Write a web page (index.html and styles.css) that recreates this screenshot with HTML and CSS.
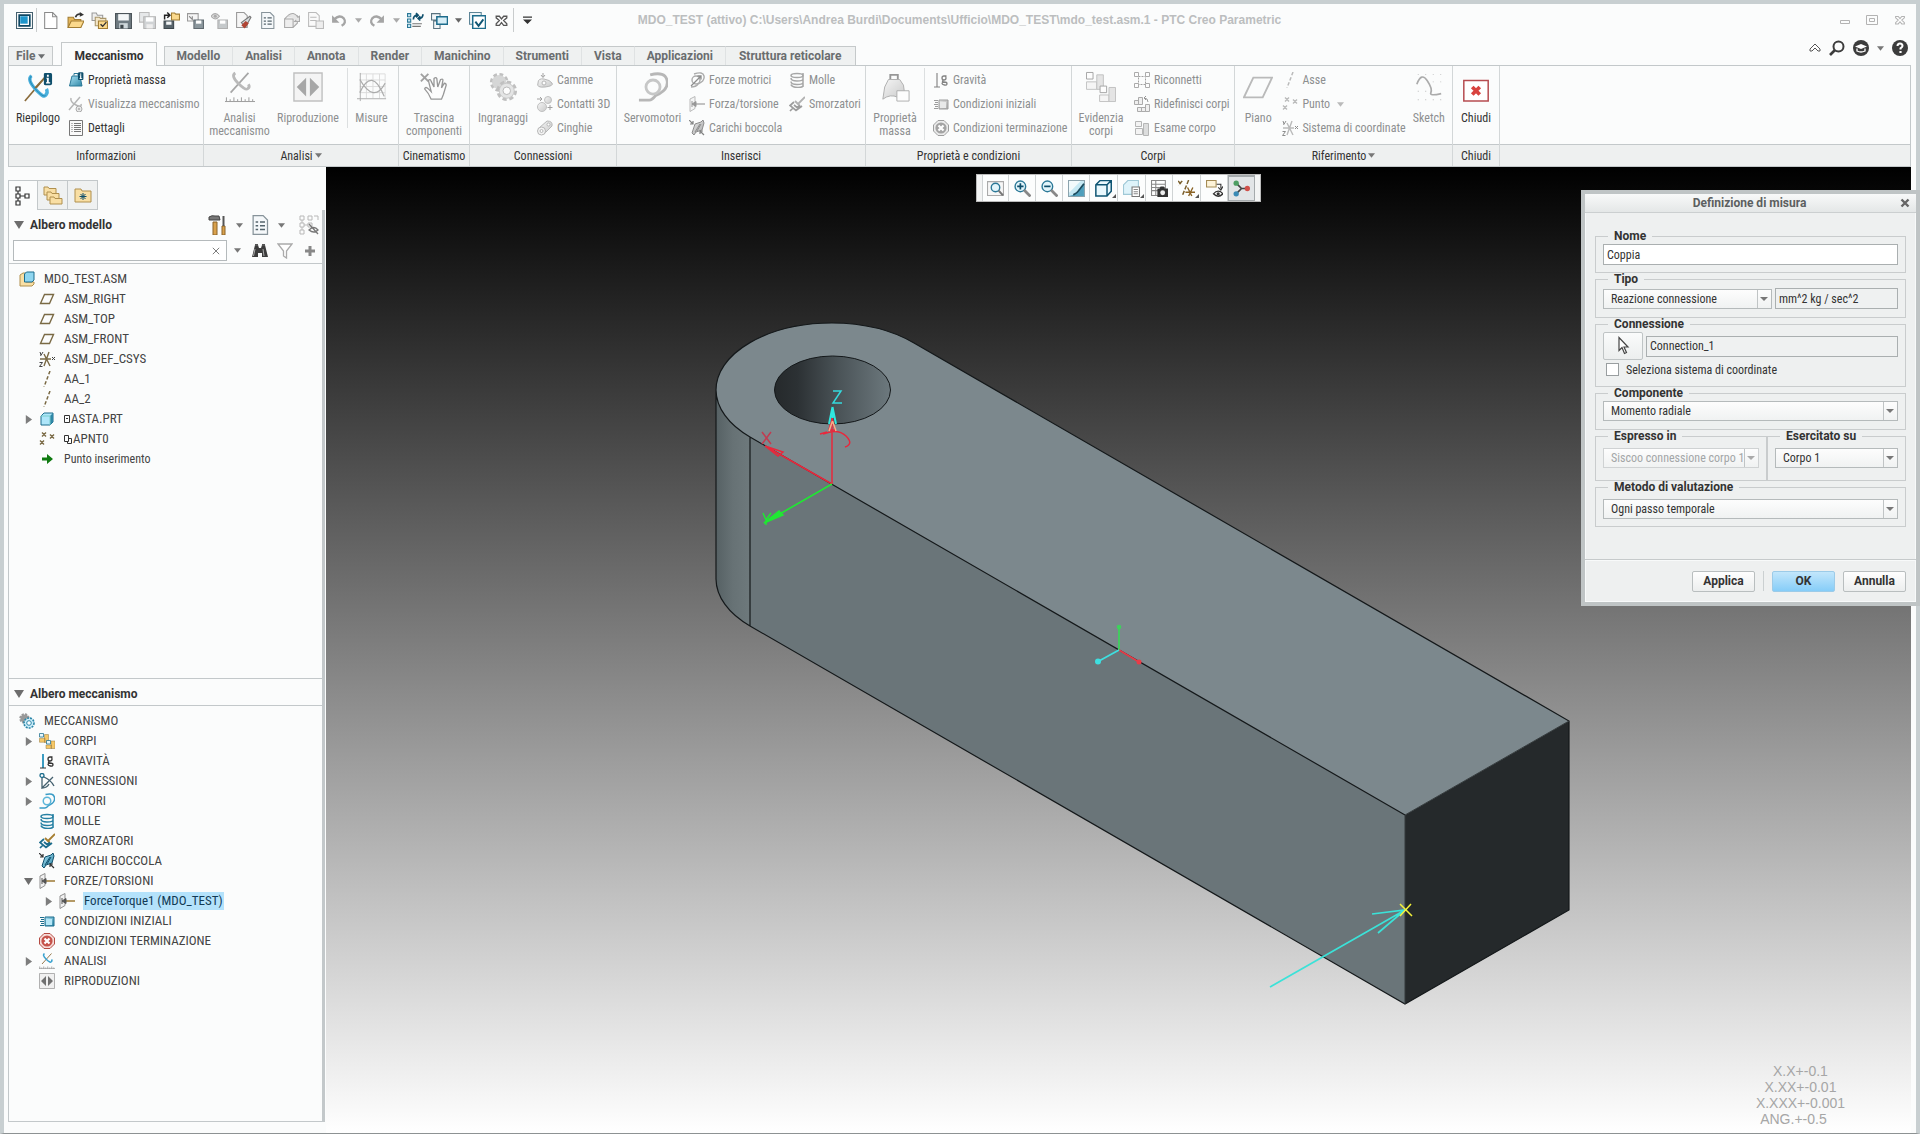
FILE: index.html
```html
<!DOCTYPE html>
<html lang="it">
<head>
<meta charset="utf-8">
<title>MDO_TEST (attivo) - PTC Creo Parametric</title>
<link rel="stylesheet" href="styles.css">
</head>
<body>
<svg class="defs" aria-hidden="true">
  <linearGradient id="gBlue" x1="0" y1="0" x2="1" y2="1"><stop offset="0" stop-color="#a9e2f5"/><stop offset="1" stop-color="#2f87a6"/></linearGradient>
  <linearGradient id="gGrey" x1="0" y1="0" x2="1" y2="1"><stop offset="0" stop-color="#f2f2f2"/><stop offset="1" stop-color="#a8a8a8"/></linearGradient>
  <symbol id="caret" viewBox="0 0 8 5"><path d="M0 0h8L4 5z" fill="currentColor"/></symbol>
  <symbol id="tri-r" viewBox="0 0 10 10"><path d="M2 0l7 5-7 5z" fill="#7d7d7d"/></symbol>
  <symbol id="tri-d" viewBox="0 0 10 10"><path d="M0 1h10L5 9z" fill="#6d6d6d"/></symbol>
  <symbol id="app" viewBox="0 0 16 16"><path d="M.5.5h15v15H.5z" fill="#fff" stroke="#44606e"/><path d="M3 3h10v10H3z" fill="#fff" stroke="#0f4763" stroke-width="1.6"/><path d="M4 4h7v7H4z" fill="#1e96cc"/></symbol>
  <symbol id="new" viewBox="0 0 16 16"><path d="M2.5.5H10L14 4.500V15.500H2.500z" fill="#fff" stroke="#8a8a8a"/><path d="M10 .5v4h4" fill="none" stroke="#8a8a8a"/></symbol>
  <symbol id="open" viewBox="0 0 16 16"><path d="M1 14V5h5l1 2h6v7z" fill="#e6b75a" stroke="#a27d33"/><path d="M1 14.500L4 8.500h12l-3 6z" fill="#fbd98c" stroke="#a27d33"/><path d="M8 5q1-3.500 5-3" fill="none" stroke="#333" stroke-width="1.500"/><path d="M12 0l4 2.500-4 2z" fill="#333"/></symbol>
  <symbol id="workdir" viewBox="0 0 16 16"><path d="M1 8V1h4l1 2h5v5z" fill="#eee" stroke="#999"/><path d="M4 13V5h4l1 1h5v7z" fill="#f3e6c8" stroke="#a9966a"/><path d="M7 15.500v-7h8.500v7z" fill="#fbd98c" stroke="#a27d33"/><path d="M9 11.500l2 2 3.500-4" fill="none" stroke="#333" stroke-width="1.300"/></symbol>
  <symbol id="save" viewBox="0 0 16 16"><path d="M.5 1.500h15v14H.5z" fill="#6f7b82" stroke="#4c555a"/><path d="M3 2h10v6H3z" fill="#f4f7f8"/><path d="M4 10.500h8v5H4z" fill="#cfd8dc"/><path d="M5 12h3v3.500H5z" fill="#3d464b"/></symbol>
  <symbol id="saves" viewBox="0 0 16 16"><path d="M.5.500h9v9h-9z" fill="#e6e8e9" stroke="#bbb"/><path d="M4.500 4.500h11v11h-11z" fill="#d0d3d5" stroke="#b4b4b4"/><path d="M6.500 5h7v4h-7z" fill="#fff"/><path d="M7 11.500h6v4H7z" fill="#eee"/></symbol>
  <symbol id="savecopy" viewBox="0 0 16 16"><path d="M8 1h3l1 1h3.500v5.500H8z" fill="#fbd98c" stroke="#a27d33"/><path d="M1 8.500h9v7H1z" fill="#59656c" stroke="#3c464b"/><path d="M3 9h5v3H3z" fill="#f4f7f8"/><path d="M1.500 7V3h4M4 .500L6.500 3 4 5.500" fill="none" stroke="#222" stroke-width="1.400"/></symbol>
  <symbol id="backup" viewBox="0 0 16 16"><path d="M.5 1.500h10v7H.5z" fill="#f6f6f6" stroke="#9a9a9a"/><path d="M6.500 7.500h9v8h-9z" fill="#8b979d" stroke="#606a70"/><path d="M8.500 8h5v3h-5z" fill="#fff"/><path d="M2 4l3 3V4" fill="none" stroke="#888"/></symbol>
  <symbol id="eyesave" viewBox="0 0 16 16"><path d="M0 4q4-5 8 0q-4 5-8 0z" fill="#ddd" stroke="#aaa"/><circle cx="4" cy="4" r="1.500" fill="#aaa"/><path d="M6.500 7.500h9v8h-9z" fill="#c5c9cb" stroke="#b0b0b0"/><path d="M8.500 8h5v3h-5z" fill="#fff"/></symbol>
  <symbol id="erase" viewBox="0 0 16 16"><path d="M1.500.500h7l3 3v11h-10z" fill="#f6f6f6" stroke="#999"/><path d="M6 10l4 4 5-9-1-1z" fill="#d7dbdd" stroke="#777"/><path d="M6 12.500l3 3 4-5-3-2z" fill="#b04434"/></symbol>
  <symbol id="list" viewBox="0 0 16 16"><path d="M2.500.500h8L14 4v11.500H2.500z" fill="#f5f8fa" stroke="#87939a"/><path d="M4.500 5.500h2m1.500 0h4m-7.500 3h2m1.500 0h4m-7.500 3h2m1.500 0h4" stroke="#55646c" stroke-width="1.200"/></symbol>
  <symbol id="regen" viewBox="0 0 16 16"><path d="M1.500 6.500h8v8h-8zM1.500 6.500l3-3h9v7l-4 4" fill="#eee" stroke="#aaa"/><path d="M5 3q5-4 9 2l1.500-1V9H11l1.500-1.500" fill="#e6e6e6" stroke="#aaa"/></symbol>
  <symbol id="copylist" viewBox="0 0 16 16"><path d="M1.500.500h7l3 3v10h-10z" fill="#fafafa" stroke="#bbb"/><path d="M3 5h6M3 8h6" stroke="#bbb"/><path d="M8.500 8.500h7v7h-7z" fill="#eee" stroke="#bbb"/></symbol>
  <symbol id="undo" viewBox="0 0 16 16"><path d="M3 7q5-5 9-1q3 4-2 7" fill="none" stroke="#a5a5a5" stroke-width="2.200"/><path d="M1 3v7h7z" fill="#a5a5a5"/></symbol>
  <symbol id="model" viewBox="0 0 16 16"><path d="M.5 1.500h3v3h-3zM.5 6.500h3v3h-3zM.5 11.500h3v3h-3z" fill="#cdeaf5" stroke="#2b7897"/><path d="M5 11h9M5 13.500h8" stroke="#777"/><path d="M6 7q0-4 4-4M8.500 1l2 2-2 2M15 2q0 4-4 4M12.500 4l-2 2 2 2" fill="none" stroke="#0f4f6c" stroke-width="1.600"/></symbol>
  <symbol id="wins" viewBox="0 0 16 16"><path d="M.5 1.500h8v6h-8zM3.500 8.500h5v7h-6v-7z" fill="#f2f6f8" stroke="#5b7380"/><path d="M5.500 4.500h10v7h-10z" fill="#d7eef7" stroke="#1d6c8c" stroke-width="1.400"/></symbol>
  <symbol id="wincheck" viewBox="0 0 16 16"><path d="M.5.500h11v11H.5z" fill="#eef6f9" stroke="#5d8597"/><path d="M3.500 3.500h12v12h-12z" fill="#fff" stroke="#1d6c8c" stroke-width="1.400"/><path d="M6 9l3 4 4.500-6" fill="none" stroke="#0f5573" stroke-width="1.800"/></symbol>
  <symbol id="xout" viewBox="0 0 16 16"><path d="M3 4h3l2 2.500L10 4h3v1.500L10 8l3 3v1.500h-3L8 10l-2 2.500H3V11l3-3-3-2.500z" fill="#fff" stroke="currentColor" stroke-width="1.200"/></symbol>
  <symbol id="qcaret" viewBox="0 0 10 10"><path d="M0 1h10v1.500H0zM0 4.500h10L5 9.500z" fill="#333"/></symbol>
  <symbol id="min" viewBox="0 0 12 12"><path d="M1.500 6.500h9v3h-9z" fill="none" stroke="#b3b3b3"/></symbol>
  <symbol id="max" viewBox="0 0 12 12"><path d="M.5 1.500h11v9H.5zM3.500 4.500h5v3h-5z" fill="none" stroke="#b3b3b3"/></symbol>
  <symbol id="chev" viewBox="0 0 12 10"><path d="M1 6l5-5 5 5v2H9L6 5 3 8H1z" fill="#fff" stroke="#555"/></symbol>
  <symbol id="search" viewBox="0 0 16 16"><circle cx="9.500" cy="6.500" r="5" fill="none" stroke="#3c3c3c" stroke-width="2"/><path d="M6 10l-5 5" stroke="#3c3c3c" stroke-width="2.600"/></symbol>
  <symbol id="learn" viewBox="0 0 16 16"><circle cx="8" cy="8" r="8" fill="#3c3c3c"/><path d="M2 6.500L8 4l6 2.500L8 9z" fill="#fff"/><path d="M4 8.500V11q4 2 8 0V8.500" fill="none" stroke="#fff" stroke-width="1.300"/></symbol>
  <symbol id="help" viewBox="0 0 16 16"><circle cx="8" cy="8" r="8" fill="#3c3c3c"/><path d="M5.500 6q0-2.500 2.500-2.500T10.500 6Q10.500 7 8.500 8.300V9.600" fill="none" stroke="#fff" stroke-width="2"/><path d="M7.400 11h2.200v2H7.400z" fill="#fff"/></symbol>

  <symbol id="mech" viewBox="0 0 32 32"><path d="M2 31L25 4" stroke="#8a6b3a" stroke-width="1.800"/><path d="M9 4Q4 8 13 18T24 25Q27 22 25 18" fill="none" stroke="#4ab0dc" stroke-width="3.600"/><path d="M9 4Q4 8 13 18T24 25" fill="none" stroke="#2186b3"/><path d="M13 17L25 4" stroke="#8a6b3a" stroke-width="1.800"/></symbol>
  <symbol id="info" viewBox="0 0 10 14"><rect width="9" height="13" rx="2" fill="#0f4f6c"/><path d="M3.500 2h2v2h-2zM3 5h2.500v5H7v1.300H2.500V10h1V6.300H3z" fill="#fff"/></symbol>
  <symbol id="summary" viewBox="0 0 32 32"><use href="#mech" width="32" height="32"/><use href="#info" x="22" y="1" width="10" height="14"/></symbol>
  <symbol id="massinfo" viewBox="0 0 16 16"><path d="M6 3.500V1.500h4v2" fill="none" stroke="#2b7897"/><path d="M4 4h8l2 10H1.500z" fill="url(#gBlue)" stroke="#2b7897"/><use href="#info" x="10" y="0" width="6" height="9"/></symbol>
  <symbol id="massnote" viewBox="0 0 32 32"><path d="M11 8V3h8v5" fill="none" stroke="#555" stroke-width="2"/><path d="M9 8h12l4 6 2 14-8-1q-8-4-16 2l2-13z" fill="url(#gGrey)" stroke="#777"/><path d="M18 20h13v11H18z" fill="#fff" stroke="#777"/></symbol>
  <symbol id="mecheye" viewBox="0 0 16 16"><path d="M1 14L12 1M3 2q-1 4 5 7t5-1" fill="none" stroke="#888" stroke-width="1.500"/><circle cx="11" cy="13" r="3" fill="#ddd" stroke="#777"/><circle cx="11" cy="13" r="1" fill="#777"/></symbol>
  <symbol id="details" viewBox="0 0 16 16"><path d="M1.500.500h13v15h-13z" fill="#fafafa" stroke="#777"/><path d="M3.500 3.500h1m1.500 0h7m-9.500 2h1m1.500 0h7m-9.500 2h1m1.500 0h7m-9.500 2h1m1.500 0h7m-9.500 2h1m1.500 0h7" stroke="#777"/></symbol>
  <symbol id="analysis" viewBox="0 0 32 32"><path d="M6 22L25 1" stroke="#8a6b3a" stroke-width="1.800"/><path d="M11 1Q6 4 14 12T24 18Q27 16 25 13" fill="none" stroke="#3aa2cf" stroke-width="3"/><path d="M0 31.500h32M1.500 31v-4M5.500 31v-2M9.500 31v-4M13.500 31v-2M17.500 31v-4M21.500 31v-2M25.500 31v-4M29.500 31v-2" stroke="#555"/></symbol>
  <symbol id="play" viewBox="0 0 32 32"><path d="M1 1h30v30H1z" fill="#f0f0f0" stroke="#999" stroke-width="1.500"/><path d="M14 6v20L4 16zM18 6v20l10-10z" fill="#707070"/></symbol>
  <symbol id="measures" viewBox="0 0 32 32"><path d="M3 2h27v26M3 8.500h27M3 15.500h27M3 22h27M10 2v26M17 2v26M24 2v26" fill="none" stroke="#c5c5c5"/><path d="M3.500 1v30M0 28.500h31" stroke="#777"/><path d="M3 22Q16-6 29 26M3 8Q18 34 30 12" fill="none" stroke="#777" stroke-width="1.400"/></symbol>
  <symbol id="drag" viewBox="0 0 32 32"><path d="M2 2l8 8M10 2l-8 8" stroke="#666" stroke-width="2"/><path d="M13 29Q10 22 6 18q1-3 4 0l3 3L10 9q2-2 3 1l3 6V7q2-2 3 0l1 9 3-8q3-1 2.500 1L24 17l3-5q2 0 2 2l-3 10-2 5z" fill="#fff" stroke="#555" stroke-width="1.400"/></symbol>
  <symbol id="gears" viewBox="0 0 32 32"><circle cx="12" cy="11" r="7.500" fill="#bbb" stroke="#999" stroke-width="5" stroke-dasharray="3.500 2.390"/><circle cx="12" cy="11" r="7.500" fill="#bdbdbd"/><circle cx="20" cy="20" r="8" fill="#ddd" stroke="#999" stroke-width="6" stroke-dasharray="3.800 2.480"/><circle cx="20" cy="20" r="8" fill="#d6d6d6" stroke="#a5a5a5"/><circle cx="20" cy="20" r="4" fill="#fff" stroke="#888"/></symbol>
  <symbol id="cam" viewBox="0 0 16 16"><path d="M6 1v4M4 3l2 2.500L8 3" fill="none" stroke="#666"/><path d="M1 11q0-5 6-4t8 4-7 4-7-4z" fill="url(#gGrey)" stroke="#888"/><circle cx="7" cy="11" r="2" fill="#fff" stroke="#888"/></symbol>
  <symbol id="contact" viewBox="0 0 16 16"><circle cx="11" cy="4" r="3.500" fill="url(#gGrey)" stroke="#999"/><circle cx="5" cy="11" r="4.500" fill="url(#gGrey)" stroke="#999"/><path d="M0 3h5M3 1l2 2-2 2M13 9v5M10.500 11.500h5" fill="none" stroke="#666"/></symbol>
  <symbol id="belt" viewBox="0 0 16 16"><path d="M2 8l8-7q6 0 5 5l-8 8" fill="url(#gGrey)" stroke="#888"/><circle cx="4.500" cy="11" r="4" fill="#eee" stroke="#888"/><circle cx="4.500" cy="11" r="1.500" fill="#fff" stroke="#888"/><circle cx="11.500" cy="4.500" r="1.500" fill="#fff" stroke="#888"/></symbol>
  <symbol id="servo" viewBox="0 0 32 32"><path d="M13 3Q29-1 31 9t-12 16q-4 5-7 5H1" fill="none" stroke="#3a9cc6" stroke-width="3"/><circle cx="16" cy="16" r="7.500" fill="none" stroke="#5bb5d9" stroke-width="3"/></symbol>
  <symbol id="fmotor" viewBox="0 0 16 16"><path d="M5 2q9-3 10 2t-6 8q-2 3-7 3" fill="none" stroke="#777" stroke-width="1.400"/><circle cx="7" cy="8" r="4" fill="none" stroke="#777" stroke-width="1.400"/><path d="M2 14L12 4M8.500 4H12v3.500" fill="none" stroke="#444" stroke-width="1.300"/></symbol>
  <symbol id="force" viewBox="0 0 16 16"><path d="M1 3l5-2.500v12L1 15.500z" fill="#f1f1f1" stroke="#8f8f8f"/><path d="M16 8H5" stroke="#9c7a35" stroke-width="1.500"/><path d="M3 8l4-2.500v5zM3 5v6" fill="#555" stroke="#555"/></symbol>
  <symbol id="bush" viewBox="0 0 16 16"><path d="M3 13l3-9 6-2 2-2 1 3-2 7-6 2-2 3z" fill="url(#gBlue)" stroke="#0f4f6c"/><path d="M0 0l4 4M4 1v3H1M15 15l-4-4M11 14v-3h3" fill="none" stroke="#333" stroke-width="1.200"/><path d="M6 12l5-8M8 11l4-7" stroke="#0f4f6c"/></symbol>
  <symbol id="spring" viewBox="0 0 16 16"><g fill="none" stroke="#2680a3" stroke-width="1.500"><ellipse cx="8" cy="3.500" rx="6" ry="2"/><path d="M2 6q0 3 6 3t6-2M2 9.500q0 3 6 3t6-2M2 12.500q1 3 7 3t5-3M14 1v14"/></g></symbol>
  <symbol id="damper" viewBox="0 0 16 16"><path d="M16 1l-7 7M6 5l5 5" fill="none" stroke="#a67e30" stroke-width="1.800"/><path d="M5 6L1 9.500l6 5 6-4.500M5 9l3 2.500 3-2M4 12l-3 3" fill="none" stroke="#1c6d8d" stroke-width="1.700"/></symbol>
  <symbol id="gravity" viewBox="0 0 16 16"><path d="M4 1v14" stroke="#3b9cc2" stroke-width="2"/><path d="M1 15h6" stroke="#333"/><path d="M13.500 4H11q-2 0-2 2t2 2 2-2-1-2M10 8.500q-1.500 1.500 1 1.500 3 0 3 1.700T11.500 13 9 11.500 11 10" fill="none" stroke="#333" stroke-width="1.300"/></symbol>
  <symbol id="initial" viewBox="0 0 16 16"><path d="M1 4.500h4M2 6.500h3M1 8.500h4M2 10.500h3M1 12.500h4" stroke="#1c6d8d"/><path d="M6 4h9v9H6z" fill="url(#gBlue)" stroke="#1c6d8d"/><path d="M7 6h6v6H7z" fill="#b6e6f6"/></symbol>
  <symbol id="stop" viewBox="0 0 16 16"><path d="M5 .500h6L15.500 5v6L11 15.500H5L.500 11V5z" fill="#f6dcd9" stroke="#b44a42"/><circle cx="8" cy="8" r="5.600" fill="#c6534b"/><path d="M5.500 5.500l5 5M10.500 5.500l-5 5" stroke="#fff" stroke-width="2.200"/></symbol>
  <symbol id="bodies" viewBox="0 0 32 32"><path d="M1 10.500h11v8H1zM11 3h8v16h-8zM14 24h11v7H14zM24 16h8v15h-8z" fill="#f6c868" stroke="#94793c"/><path d="M1 1h8v7H1zM15 15h8v7h-8z" fill="#e8f7fc" stroke="#1c6d8d" stroke-width="1.500"/></symbol>
  <symbol id="bodiesgrey" viewBox="0 0 32 32"><path d="M.5 10.500h11v8H.5zM14.500 24.500h10v7h-10z" fill="#f2f2f2" stroke="#999"/><path d="M11.500 3h7v15.500h-7zM24.500 16.500h7v15h-7z" fill="#d5d5d5" stroke="#999"/><path d="M.5.500h7v7h-7zM15 15h7v7h-7z" fill="#fff" stroke="#666"/></symbol>
  <symbol id="reconn" viewBox="0 0 16 16"><path d="M4.500 4.500h7v8h-7z" fill="none" stroke="#666" stroke-dasharray="2 1"/><path d="M.5.500h4v4h-4zM11.500.500h4v4h-4zM.5 11.500h4v4h-4zM11.500 11.500h4v4h-4z" fill="#fff" stroke="#777"/></symbol>
  <symbol id="redef" viewBox="0 0 16 16"><path d="M4.500 1.500h4v7h-4zM.5 4.500h4v4h-4zM3.500 11.500h4v4h-4zM7.500 11.500h4v4h-4zM11.500 8.500h4v7h-4z" fill="#e8e8e8" stroke="#777"/><path d="M14 6q0-4-4-4M12 0l-2 2 2 2" fill="none" stroke="#555"/></symbol>
  <symbol id="exam" viewBox="0 0 16 16"><path d="M1.500 1.500h6v5h-6zM1.500 8.500h7v6h-7z" fill="#eee" stroke="#888"/><path d="M9.500 3.500h5v12h-5z" fill="#c9c9c9" stroke="#888"/></symbol>
  <symbol id="plane" viewBox="0 0 32 32"><path d="M11 6h20L21 27H1z" fill="none" stroke="currentColor" stroke-width="2"/></symbol>
  <symbol id="planesm" viewBox="0 0 16 16"><path d="M5.500 3.500h9l-4 9h-9z" fill="none" stroke="currentColor" stroke-width="1.400"/></symbol>
  <symbol id="axis" viewBox="0 0 16 16"><path d="M11 0L5 16" stroke="currentColor" stroke-width="1.500" stroke-dasharray="3.500 2"/></symbol>
  <symbol id="point" viewBox="0 0 16 16"><path d="M3 1.500l4 4m0-4l-4 4M11 3.500l4 4m0-4l-4 4M1 9.500l4 4m0-4l-4 4" stroke="currentColor" stroke-width="1.400"/></symbol>
  <symbol id="csys" viewBox="0 0 16 16"><path d="M1 8h11M10 1L5 15M5 3l6 12" stroke="currentColor" stroke-width="1.400"/><path d="M1 1l1 3M4 1L1.500 5M13 6l3 3m0-3l-3 3M.5 11.500h3l-3 4h3" fill="none" stroke="#444"/></symbol>
  <symbol id="sketch" viewBox="0 0 32 32"><path d="M3 13Q8 0 14 9t4 13 11 1" fill="none" stroke="#777" stroke-width="1.800"/><g fill="#888"><path d="M4 2h1v1H4zM12 2h1v1h-1zM20 2h1v1h-1zM28 2h1v1h-1zM20 10h1v1h-1zM28 10h1v1h-1zM4 20h1v1H4zM12 20h1v1h-1zM4 29h1v1H4zM12 29h1v1h-1zM20 29h1v1h-1zM28 29h1v1h-1z"/></g></symbol>
  <symbol id="close" viewBox="0 0 32 32"><path d="M3 9h26v22H3z" fill="#fff" stroke="#b64c50" stroke-width="1.600"/><path d="M12 16l8 8M20 16l-8 8" stroke="#d8433f" stroke-width="4"/></symbol>

  <symbol id="treetab" viewBox="0 0 16 20"><path d="M1 1h4v4H1zM1 8h4v4H1zM1 15h4v4H1zM10 8h4v4h-4zM3 5v3M3 12v3M5 10h5" fill="none" stroke="#333" stroke-width="1.200"/></symbol>
  <symbol id="folders" viewBox="0 0 20 20"><g fill="#f9dfa4" stroke="#b0904e"><path d="M1 2h4l1 1.500h7V10H1z"/><path d="M4 7h4l1 1.500h7V15H4z"/><path d="M7 12h4l1 1.500h7V19H7z"/></g></symbol>
  <symbol id="favs" viewBox="0 0 20 20"><path d="M2 4h6l1 2h9v11H2z" fill="#f9dfa4" stroke="#b0904e"/><path d="M10 8v7M6.500 11.500h7M7.500 9l5 5m0-5l-5 5" stroke="#0f4f6c"/></symbol>
  <symbol id="tools" viewBox="0 0 20 20"><path d="M5 7h4v13H5zM14 11h3v9h-3z" fill="#d9a14c" stroke="#8a6229"/><path d="M1 2q3-2 6-1h4l1 4H5L1 5z" fill="#777" stroke="#444"/><path d="M15.500 1v10" stroke="#555" stroke-width="2"/></symbol>
  <symbol id="treehide" viewBox="0 0 20 20"><path d="M1 1h4v4H1zM1 8h4v4H1zM1 15h4v4H1zM9 1h4v4H9zM15 1h4v4M9 8h4v4H9zM3 5v3M3 12v3M5 10h4" fill="none" stroke="#b8b8b8"/><path d="M10 15q5-5 9 0-4 4-9 0zM10 9l9 10" fill="none" stroke="#777" stroke-width="1.300"/></symbol>
  <symbol id="binoc" viewBox="0 0 16 16"><path d="M3 2h3l1 3h2l1-3h3l3 12h-6v-4H6v4H0z" fill="#3c3c3c"/><path d="M3 1h3v2H3zM10 1h3v2h-3z" fill="#555"/><path d="M3 6l-1.500 7M11 6l1 7" stroke="#aaa"/></symbol>
  <symbol id="funnel" viewBox="0 0 16 16"><path d="M1 1h14L9.500 8v7l-3-2V8z" fill="#fff" stroke="#aaa" stroke-width="1.300"/></symbol>
  <symbol id="plus" viewBox="0 0 12 12"><path d="M4.500 1h3v3.500H11v3H7.500V11h-3V7.500H1v-3h3.500z" fill="#888"/></symbol>
  <symbol id="asm" viewBox="0 0 16 16"><path d="M1 4l3-2h3v9h8v2l-2 2H1z" fill="#f9dfa4" stroke="#b0904e"/><path d="M5.500 3l2-2H15v8l-2 2H5.500z" fill="#8fd6f0" stroke="#1c6d8d"/></symbol>
  <symbol id="part" viewBox="0 0 16 16"><path d="M2 5l3-3h9v9l-3 3H2z" fill="#aee6fa" stroke="#1c6d8d"/><path d="M11 14V5l3-3v9z" fill="#2f87a6"/><path d="M2 5h9v9" fill="none" stroke="#7cc"/></symbol>
  <symbol id="insert" viewBox="0 0 16 16"><path d="M3 6.500h5V3l6 5-6 5V9.500H3z" fill="#0f7a10"/></symbol>
  <symbol id="gearblue" viewBox="0 0 16 16"><circle cx="5.500" cy="5.500" r="4" fill="#999" stroke="#999" stroke-width="2.500" stroke-dasharray="2 1.140"/><circle cx="10" cy="10" r="5" fill="#cdeefa" stroke="#2b86a8" stroke-width="1.600" stroke-dasharray="2 1"/><circle cx="10" cy="10" r="2.300" fill="#fff" stroke="#2b86a8"/></symbol>
  <symbol id="joint" viewBox="0 0 16 16"><circle cx="3" cy="2.500" r="2" fill="#fff" stroke="#1c6d8d" stroke-width="1.300"/><path d="M3 5v10L14 4M5 4q7 3 10 9M3 15q5 0 7-4" fill="none" stroke="#44606e" stroke-width="1.300"/></symbol>

  <symbol id="refit" viewBox="0 0 16 16"><path d="M.5 1.500h15v13H.5z" fill="#f7f7f7" stroke="#aaa"/><circle cx="8" cy="7" r="4" fill="#e2f5fb" stroke="#2b7897" stroke-width="1.300"/><path d="M11 10l4 4.500" stroke="#777" stroke-width="2"/></symbol>
  <symbol id="zin" viewBox="0 0 16 16"><circle cx="6" cy="6" r="5" fill="#e2f5fb" stroke="#2b7897" stroke-width="1.300"/><path d="M9.500 9.500l6 6" stroke="#888" stroke-width="2.600"/><path d="M3 6h6M6 3v6" stroke="#0f4f6c" stroke-width="1.600"/></symbol>
  <symbol id="zout" viewBox="0 0 16 16"><circle cx="6" cy="6" r="5" fill="#e2f5fb" stroke="#2b7897" stroke-width="1.300"/><path d="M9.500 9.500l6 6" stroke="#888" stroke-width="2.600"/><path d="M3 6h6" stroke="#0f4f6c" stroke-width="1.600"/></symbol>
  <symbol id="repaint" viewBox="0 0 16 16"><path d="M.5.500h15v15H.500z" fill="#c6e9f4" stroke="#8ba3ad"/><path d="M1 12V1h11z" fill="#f2fafc"/><path d="M1 15q8-1 14-12v12z" fill="#4f9fbc"/><path d="M5 14q4-2 5-4M9.500 10.500l5.500-7" fill="none" stroke="#1c4a5c" stroke-width="1.600"/></symbol>
  <symbol id="cube" viewBox="0 0 16 16"><path d="M.800 4.500l4-4h10.500v10l-4 4.500H.800zM.800 4.500h10.500V15M11.300 4.500l4-4" fill="#e9f8fd" stroke="#0f5573" stroke-width="1.400"/></symbol>
  <symbol id="saved" viewBox="0 0 16 16"><path d="M.5 4.500l4-4h10v9l-4 4H.500z" fill="#def3fa" stroke="#9fc8d6"/><path d="M8.500 6.500h7v9h-7z" fill="#fff" stroke="#777"/><path d="M10 9h4M10 11h4M10 13h4" stroke="#888"/></symbol>
  <symbol id="viewmgr" viewBox="0 0 16 16"><path d="M.5.500h13v14H.5zM1 4h12M1 7h12M1 10h12M4.500 1v13" fill="#fff" stroke="#888"/><path d="M6 8h2l1-2h3l1 2h3v8H6z" fill="#333"/><circle cx="11" cy="12" r="2.300" fill="#eee"/></symbol>
  <symbol id="datum" viewBox="0 0 16 16"><path d="M0 1l4 4m0-4L0 5M10 0L4 15" stroke="#7a5f2c" stroke-width="1.400" stroke-dasharray="4 1.500"/><path d="M7 11.500h9M9 7l4 8M14 7l-4 8" stroke="#8a6326" stroke-width="1.300"/></symbol>
  <symbol id="annot" viewBox="0 0 16 16"><path d="M.5.500h9v6h-9z" fill="#fdf3d8" stroke="#a48b55"/><path d="M10 4h4v4M11.500 7L14 9.500 16 6" fill="none" stroke="#333"/><path d="M7 13q4.500-5 9 0-4.500 4.500-9 0z" fill="#fff" stroke="#333" stroke-width="1.200"/><circle cx="11.500" cy="13" r="1.500" fill="#333"/></symbol>
  <symbol id="spin" viewBox="0 0 16 16"><path d="M3 3l5 5h5M8 8l-5 5" fill="none" stroke="#444" stroke-width="1.600"/><circle cx="3" cy="3" r="2.500" fill="#4d9e63"/><circle cx="3" cy="13" r="2.500" fill="#3a8ab5"/><circle cx="13.500" cy="8" r="2.500" fill="#d0504a"/></symbol>
  <symbol id="cursor" viewBox="0 0 14 20"><path d="M3 1.500v13l3-3 2.500 6 2-1-2.500-5.500h4z" fill="#fff" stroke="#444" stroke-width="1.200"/></symbol>
</svg>

<div class="window">
  <header class="titlebar">
    <div class="quick">
      <button class="q" aria-label="Creo"><svg><use href="#app"/></svg></button>
      <button class="q first" aria-label="Nuovo"><svg><use href="#new"/></svg></button>
      <button class="q" aria-label="Apri"><svg><use href="#open"/></svg></button>
      <button class="q" aria-label="Directory di lavoro"><svg><use href="#workdir"/></svg></button>
      <button class="q" aria-label="Salva"><svg><use href="#save"/></svg></button>
      <button class="q" aria-label="Salva tutto"><svg><use href="#saves"/></svg></button>
      <button class="q" aria-label="Salva copia"><svg><use href="#savecopy"/></svg></button>
      <button class="q" aria-label="Backup"><svg><use href="#backup"/></svg></button>
      <button class="q" aria-label="Salva stato"><svg><use href="#eyesave"/></svg></button>
      <button class="q" aria-label="Elimina versioni"><svg><use href="#erase"/></svg></button>
      <button class="q" aria-label="Proprietà"><svg><use href="#list"/></svg></button>
      <button class="q" aria-label="Rigenera"><svg><use href="#regen"/></svg></button>
      <button class="q" aria-label="Copia elenco"><svg><use href="#copylist"/></svg></button>
      <button class="q" aria-label="Annulla azione"><svg><use href="#undo"/></svg></button>
      <button class="drop soft" aria-label="Elenco annulla"><svg><use href="#caret"/></svg></button>
      <button class="q mirror" aria-label="Ripeti"><svg><use href="#undo"/></svg></button>
      <button class="drop soft" aria-label="Elenco ripeti"><svg><use href="#caret"/></svg></button>
      <button class="q" aria-label="Rigenera modello"><svg><use href="#model"/></svg></button>
      <button class="q" aria-label="Finestre"><svg><use href="#wins"/></svg></button>
      <button class="drop" aria-label="Elenco finestre"><svg><use href="#caret"/></svg></button>
      <button class="q" aria-label="Attiva"><svg><use href="#wincheck"/></svg></button>
      <button class="q" aria-label="Chiudi finestra"><svg><use href="#xout"/></svg></button>
      <button class="q first" aria-label="Personalizza"><svg class="tiny"><use href="#qcaret"/></svg></button>
    </div>
    <h1>MDO_TEST (attivo) C:\Users\Andrea Burdi\Documents\Ufficio\MDO_TEST\mdo_test.asm.1 - PTC Creo Parametric</h1>
    <div class="winbtns">
      <button aria-label="Riduci"><svg><use href="#min"/></svg></button>
      <button aria-label="Ingrandisci"><svg><use href="#max"/></svg></button>
      <button aria-label="Esci"><svg class="wx"><use href="#xout"/></svg></button>
    </div>
  </header>

  <div class="tabrow">
    <nav class="tabs">
      <a href="#file" class="file">File <svg><use href="#caret"/></svg></a>
      <a href="#meccanismo" class="active">Meccanismo</a>
      <a href="#modello" class="lead">Modello</a><a href="#analisi">Analisi</a><a href="#annota">Annota</a><a href="#render">Render</a><a href="#manichino">Manichino</a><a href="#strumenti">Strumenti</a><a href="#vista">Vista</a><a href="#applicazioni">Applicazioni</a><a href="#struttura" class="last">Struttura reticolare</a>
    </nav>
    <div class="helpers">
      <button aria-label="Riduci barra"><svg class="chev"><use href="#chev"/></svg></button>
      <button aria-label="Cerca comando"><svg><use href="#search"/></svg></button>
      <button aria-label="Apprendimento"><svg><use href="#learn"/></svg></button>
      <button aria-label="Elenco apprendimento"><svg class="car"><use href="#caret"/></svg></button>
      <button aria-label="Guida"><svg><use href="#help"/></svg></button>
    </div>
  </div>

  <div class="ribbon">
    <section class="group">
      <div class="tools">
        <button class="big w60"><svg><use href="#summary"/></svg>Riepilogo</button>
        <div class="col">
          <button><svg><use href="#massinfo"/></svg>Proprietà massa</button>
          <button class="off"><svg><use href="#mecheye"/></svg>Visualizza meccanismo</button>
          <button><svg><use href="#details"/></svg>Dettagli</button>
        </div>
      </div>
      <h2>Informazioni</h2>
    </section>
    <section class="group">
      <div class="tools">
        <button class="big off w72"><svg><use href="#analysis"/></svg>Analisi meccanismo</button>
        <button class="big off w66"><svg><use href="#play"/></svg>Riproduzione</button>
        <button class="big off sep w48"><svg><use href="#measures"/></svg>Misure</button>
      </div>
      <h2>Analisi <svg><use href="#caret"/></svg></h2>
    </section>
    <section class="group">
      <div class="tools"><button class="big off w72"><svg><use href="#drag"/></svg>Trascina componenti</button></div>
      <h2>Cinematismo</h2>
    </section>
    <section class="group">
      <div class="tools">
        <button class="big off w66"><svg><use href="#gears"/></svg>Ingranaggi</button>
        <div class="col">
          <button class="off"><svg><use href="#cam"/></svg>Camme</button>
          <button class="off"><svg><use href="#contact"/></svg>Contatti 3D</button>
          <button class="off"><svg><use href="#belt"/></svg>Cinghie</button>
        </div>
      </div>
      <h2>Connessioni</h2>
    </section>
    <section class="group">
      <div class="tools">
        <button class="big off w72"><svg><use href="#servo"/></svg>Servomotori</button>
        <div class="col wide">
          <button class="off"><svg><use href="#fmotor"/></svg>Forze motrici</button>
          <button class="off"><svg><use href="#force"/></svg>Forza/torsione</button>
          <button class="off"><svg><use href="#bush"/></svg>Carichi boccola</button>
        </div>
        <div class="col">
          <button class="off"><svg><use href="#spring"/></svg>Molle</button>
          <button class="off"><svg><use href="#damper"/></svg>Smorzatori</button>
        </div>
      </div>
      <h2>Inserisci</h2>
    </section>
    <section class="group">
      <div class="tools">
        <button class="big off w60"><svg><use href="#massnote"/></svg>Proprietà massa</button>
        <div class="col sep pad">
          <button class="off"><svg><use href="#gravity"/></svg>Gravità</button>
          <button class="off"><svg><use href="#initial"/></svg>Condizioni iniziali</button>
          <button class="off"><svg><use href="#stop"/></svg>Condizioni terminazione</button>
        </div>
      </div>
      <h2>Proprietà e condizioni</h2>
    </section>
    <section class="group">
      <div class="tools">
        <button class="big off w60"><svg><use href="#bodiesgrey"/></svg>Evidenzia corpi</button>
        <div class="col inset">
          <button class="off"><svg><use href="#reconn"/></svg>Riconnetti</button>
          <button class="off"><svg><use href="#redef"/></svg>Ridefinisci corpi</button>
          <button class="off"><svg><use href="#exam"/></svg>Esame corpo</button>
        </div>
      </div>
      <h2>Corpi</h2>
    </section>
    <section class="group">
      <div class="tools">
        <button class="big off w48"><svg><use href="#plane"/></svg>Piano</button>
        <div class="col">
          <button class="off"><svg><use href="#axis"/></svg>Asse</button>
          <button class="off"><svg><use href="#point"/></svg>Punto <svg class="car"><use href="#caret"/></svg></button>
          <button class="off"><svg><use href="#csys"/></svg>Sistema di coordinate</button>
        </div>
        <button class="big off w48"><svg><use href="#sketch"/></svg>Sketch</button>
      </div>
      <h2>Riferimento <svg><use href="#caret"/></svg></h2>
    </section>
    <section class="group">
      <div class="tools"><button class="big w48"><svg><use href="#close"/></svg>Chiudi</button></div>
      <h2>Chiudi</h2>
    </section>
    <section class="group rest"><div class="tools"></div><h2></h2></section>
  </div>

  <main class="work">
    <aside class="side">
      <div class="sidetabs">
        <button class="on" aria-label="Albero modello"><svg><use href="#treetab"/></svg></button>
        <button aria-label="Cartelle"><svg><use href="#folders"/></svg></button>
        <button aria-label="Preferiti"><svg><use href="#favs"/></svg></button>
      </div>
      <div class="panel">
        <section class="model">
          <div class="head">
            <h3><svg><use href="#tri-d"/></svg>Albero modello</h3>
            <button aria-label="Impostazioni"><svg><use href="#tools"/></svg></button>
            <button class="dd" aria-label="Elenco impostazioni"><svg><use href="#caret"/></svg></button>
            <button aria-label="Mostra"><svg><use href="#list"/></svg></button>
            <button class="dd" aria-label="Elenco mostra"><svg><use href="#caret"/></svg></button>
            <button class="end" aria-label="Nascondi albero"><svg><use href="#treehide"/></svg></button>
          </div>
          <div class="find">
            <div class="box"><input type="text" aria-label="Cerca nell'albero"><button aria-label="Cancella"><svg viewBox="0 0 10 10"><path d="M1 1l8 8M9 1L1 9" stroke="#777" stroke-width="1.200"/></svg></button></div>
            <button class="dd" aria-label="Opzioni di ricerca"><svg><use href="#caret"/></svg></button>
            <button aria-label="Trova"><svg><use href="#binoc"/></svg></button>
            <button aria-label="Filtro"><svg><use href="#funnel"/></svg></button>
            <button aria-label="Aggiungi"><svg class="pl"><use href="#plus"/></svg></button>
          </div>
          <ul class="tree">
            <li class="l0"><svg><use href="#asm"/></svg><span>MDO_TEST.ASM</span></li>
            <li class="l1 datum"><i></i><svg><use href="#planesm"/></svg><span>ASM_RIGHT</span></li>
            <li class="l1 datum"><i></i><svg><use href="#planesm"/></svg><span>ASM_TOP</span></li>
            <li class="l1 datum"><i></i><svg><use href="#planesm"/></svg><span>ASM_FRONT</span></li>
            <li class="l1 datum"><i></i><svg><use href="#csys"/></svg><span>ASM_DEF_CSYS</span></li>
            <li class="l1 datum"><i></i><svg><use href="#axis"/></svg><span>AA_1</span></li>
            <li class="l1 datum"><i></i><svg><use href="#axis"/></svg><span>AA_2</span></li>
            <li class="l1"><i><svg><use href="#tri-r"/></svg></i><svg><use href="#part"/></svg><span><svg class="mark" viewBox="0 0 7 9"><path d="M.5.500h5v7h-5zM2 3.500h2" fill="none" stroke="#333"/></svg>ASTA.PRT</span></li>
            <li class="l1 datum"><i></i><svg><use href="#point"/></svg><span><svg class="mark wide" viewBox="0 0 9 9"><path d="M.5.500h4v6h-4zM4.500 3.500h3v5h-4v-2" fill="none" stroke="#333"/></svg>APNT0</span></li>
            <li class="l1"><i></i><svg><use href="#insert"/></svg><span class="sm">Punto inserimento</span></li>
          </ul>
        </section>
        <section class="mechs">
          <div class="head"><h3><svg><use href="#tri-d"/></svg>Albero meccanismo</h3></div>
          <ul class="tree">
            <li class="l0"><svg><use href="#gearblue"/></svg><span>MECCANISMO</span></li>
            <li class="l1"><i><svg><use href="#tri-r"/></svg></i><svg><use href="#bodies"/></svg><span>CORPI</span></li>
            <li class="l1"><i></i><svg><use href="#gravity"/></svg><span>GRAVITÀ</span></li>
            <li class="l1"><i><svg><use href="#tri-r"/></svg></i><svg><use href="#joint"/></svg><span>CONNESSIONI</span></li>
            <li class="l1"><i><svg><use href="#tri-r"/></svg></i><svg><use href="#servo"/></svg><span>MOTORI</span></li>
            <li class="l1"><i></i><svg><use href="#spring"/></svg><span>MOLLE</span></li>
            <li class="l1"><i></i><svg><use href="#damper"/></svg><span>SMORZATORI</span></li>
            <li class="l1"><i></i><svg><use href="#bush"/></svg><span>CARICHI BOCCOLA</span></li>
            <li class="l1"><i><svg><use href="#tri-d"/></svg></i><svg><use href="#force"/></svg><span>FORZE/TORSIONI</span></li>
            <li class="l2"><i><svg><use href="#tri-r"/></svg></i><svg><use href="#force"/></svg><span class="sel">ForceTorque1 (MDO_TEST)</span></li>
            <li class="l1"><i></i><svg><use href="#initial"/></svg><span>CONDIZIONI INIZIALI</span></li>
            <li class="l1"><i></i><svg><use href="#stop"/></svg><span>CONDIZIONI TERMINAZIONE</span></li>
            <li class="l1"><i><svg><use href="#tri-r"/></svg></i><svg><use href="#analysis"/></svg><span>ANALISI</span></li>
            <li class="l1"><i></i><svg><use href="#play"/></svg><span>RIPRODUZIONI</span></li>
          </ul>
        </section>
      </div>
    </aside>

    <section class="canvas">
      <svg class="scene" viewBox="326 167 1585 966" role="img" aria-label="Modello 3D">
        <defs>
          <linearGradient id="cyl" x1="716" x2="750" y1="0" y2="0" gradientUnits="userSpaceOnUse"><stop offset="0" stop-color="#566164"/><stop offset=".5" stop-color="#677275"/><stop offset="1" stop-color="#6e797c"/></linearGradient>
          <linearGradient id="hole" x1="774" x2="891" y1="0" y2="0" gradientUnits="userSpaceOnUse"><stop offset="0" stop-color="#25292b"/><stop offset=".2" stop-color="#2c3134"/><stop offset=".55" stop-color="#4a5357"/><stop offset="1" stop-color="#6d797e"/></linearGradient>
        </defs>
        <path d="M716 390V579A116 67 0 0 0 750 626V437A116 67 0 0 1 716 390z" fill="url(#cyl)"/>
        <path d="M750 437L1405 815V1004L750 626z" fill="#6a7579"/>
        <path d="M1405 815L1569 721V910L1405 1004z" fill="#25292b"/>
        <path d="M750 437A116 67 0 0 1 716 390A116 67 0 0 1 832 323A116 67 0 0 1 914 343L1569 721 1405 815z" fill="#7c888d"/>
        <ellipse cx="832.500" cy="390" rx="58" ry="34" fill="url(#hole)" stroke="#14181a"/>
        <path d="M716 390V579A116 67 0 0 0 750 626L1405 1004 1569 910V721L914 343A116 67 0 0 0 832 323A116 67 0 0 0 716 390A116 67 0 0 0 750 437V626M750 437L1405 815" fill="none" stroke="#14181a" stroke-width="1.200"/>
        <path d="M1405 815V1004M1405 815L1569 721" stroke="#353b3d"/>
        <g fill="none" stroke-width="1.500">
          <path d="M832 484V420M823 434Q838 428 846 436T845 447M820 434L827 432M829 430L832 418 835 430z" stroke="#e8283c"/>
          <path d="M832.500 407L829 424M832.500 407L836 424M832.500 407V418" stroke="#2fe6e0" stroke-width="2"/>
          <path d="M832.500 421L829 431M832.500 421L836 431" stroke="#f2b38a"/>
          <path d="M833 391H841L833 403H842" stroke="#35d9dd"/>
          <path d="M832 484L765 446M765 446L778 456 783 452z" stroke="#e8283c"/>
          <path d="M762 432L771 444M771 432L762 444" stroke="#c23b50"/>
          <path d="M832 484L764 523" stroke="#1fe832" stroke-width="1.600"/><path d="M764 523L779 511 783 515z" fill="#1fe832" stroke="#1fe832"/>
          <path d="M763 513L766 520 771 513M766 520V525" stroke="#1fe832"/>
          <path d="M1119 650V627" stroke="#3ed15c" stroke-width="1.800"/><path d="M1119 650L1139 662" stroke="#e83c48" stroke-width="1.800"/><path d="M1119 650L1099 661" stroke="#3edfe0" stroke-width="1.800"/>
          <path d="M1270 987L1405 910M1372 914L1405 910 1378 933" stroke="#3be2d8" stroke-width="1.700"/>
          <path d="M1400 904L1412 916M1411 904L1400 916" stroke="#f4f23a"/>
        </g>
        <circle cx="1119" cy="627" r="2.300" fill="#3ed15c"/><circle cx="1139" cy="662" r="2.500" fill="#e83c48"/><circle cx="1098" cy="661.500" r="3" fill="#3edfe0"/>
      </svg>
      <div class="viewbar">
        <button aria-label="Adatta"><svg><use href="#refit"/></svg></button>
        <button aria-label="Zoom avanti"><svg><use href="#zin"/></svg></button>
        <button aria-label="Zoom indietro"><svg><use href="#zout"/></svg></button>
        <button aria-label="Ridisegna"><svg><use href="#repaint"/></svg></button>
        <button class="more" aria-label="Stile visualizzazione"><svg><use href="#cube"/></svg></button>
        <button class="more" aria-label="Orientamenti salvati"><svg><use href="#saved"/></svg></button>
        <button aria-label="Gestione viste"><svg><use href="#viewmgr"/></svg></button>
        <button class="more" aria-label="Filtri riferimenti"><svg><use href="#datum"/></svg></button>
        <button aria-label="Annotazioni"><svg><use href="#annot"/></svg></button>
        <button class="on" aria-label="Centro rotazione"><svg><use href="#spin"/></svg></button>
      </div>
      <div class="tol"><p>X.X+-0.1</p><p>X.XX+-0.01</p><p>X.XXX+-0.001</p><p class="ang">ANG.+-0.5</p></div>
    </section>
  </main>

  <form class="dialog" role="dialog" aria-labelledby="dt">
    <div class="dtitle"><h2 id="dt">Definizione di misura</h2><button type="button" aria-label="Chiudi"><svg viewBox="0 0 10 10"><path d="M1.500 1.500l7 7M8.500 1.500l-7 7" stroke="#666" stroke-width="2.400"/></svg></button></div>
    <div class="dbody">
      <fieldset class="f-name"><legend>Nome</legend><input type="text" value="Coppia" aria-label="Nome"></fieldset>
      <fieldset class="f-type"><legend>Tipo</legend>
        <div class="line"><span class="pick"><select aria-label="Tipo"><option>Reazione connessione</option></select></span><input class="unit" type="text" value="mm^2 kg / sec^2" readonly aria-label="Unità"></div></fieldset>
      <fieldset class="f-conn"><legend>Connessione</legend>
        <div class="line"><button type="button" class="arrow" aria-label="Seleziona"><svg><use href="#cursor"/></svg></button><input type="text" value="Connection_1" readonly aria-label="Connessione"></div>
        <label class="tick"><input type="checkbox">Seleziona sistema di coordinate</label></fieldset>
      <fieldset class="f-comp"><legend>Componente</legend><span class="pick"><select aria-label="Componente"><option>Momento radiale</option></select></span></fieldset>
      <div class="pair">
        <fieldset class="f-tall"><legend>Espresso in</legend><span class="pick dis"><select disabled aria-label="Espresso in"><option>Siscoo connessione corpo 1</option></select></span></fieldset>
        <fieldset class="f-tall"><legend>Esercitato su</legend><span class="pick"><select aria-label="Esercitato su"><option>Corpo 1</option></select></span></fieldset>
      </div>
      <fieldset class="f-eval"><legend>Metodo di valutazione</legend><span class="pick"><select aria-label="Metodo di valutazione"><option>Ogni passo temporale</option></select></span></fieldset>
    </div>
    <div class="dfoot"><button type="button">Applica</button><span class="bar"></span><button type="button" class="ok">OK</button><button type="button">Annulla</button></div>
  </form>
</div>
</body>
</html>
```
FILE: styles.css
```css
* { box-sizing: border-box; margin: 0; padding: 0; }

body {
  font: 12px/14px "Roboto Condensed", Roboto, sans-serif;
  color: #333;
  background: #fbfcfc;
}

button, input, select { font: inherit; color: inherit; }
button { border: 0; background: none; display: inline-flex; align-items: center; justify-content: center; }
a { color: inherit; text-decoration: none; }
svg { display: block; flex: none; }
.defs { position: absolute; width: 0; height: 0; }

.window {
  position: relative;
  display: flex;
  flex-direction: column;
  min-height: 100vh;
  border: 4px solid #c8cfd1;
  border-bottom: 1px solid #8d9293;
  padding: 0 5px 0 4px;
}

/* title bar */
.titlebar {
  display: grid;
  grid-template-columns: 1fr auto 1fr;
  align-items: center;
  height: 32px;
}
.titlebar h1 { font: 700 12px/16px "Liberation Sans", sans-serif; color: #bcbebf; white-space: nowrap; }
.quick { display: flex; align-items: center; padding-left: 4px; }
.q { width: 24px; height: 24px; }
.q svg { width: 17px; height: 17px; color: #555; }
.q.first { border-left: 1px solid #c9cccd; width: 27px; }
.q svg.tiny { width: 9px; height: 10px; }
.q.mirror { transform: scaleX(-1); }
.drop { width: 14px; height: 24px; color: #666; }
.drop svg { width: 7px; height: 5px; }
.drop.soft { color: #aaa; }
.winbtns { display: flex; justify-content: flex-end; gap: 15px; padding-right: 4px; color: #b3b3b3; }
.winbtns svg { width: 12px; height: 12px; }
.winbtns svg.wx { width: 14px; height: 14px; }

/* tabs */
.tabrow { display: flex; justify-content: space-between; align-items: flex-end; height: 29px; }
.tabs { display: flex; align-items: flex-end; font: 700 12px/18px Roboto, sans-serif; color: #6a6d6f; }
.tabs a {
  height: 19px;
  padding: 0 12px;
  background: #eff1f1;
  border-top: 1px solid #c5c9ca;
  border-right: 1px solid #dfe2e3;
}
.tabs a.file { display: flex; align-items: center; gap: 3px; padding: 0 7px; border: 1px solid #c5c9ca; border-bottom: 0; }
.tabs a.file svg { width: 7px; height: 5px; }
.tabs a.active {
  position: relative;
  height: 24px;
  margin: 0 7px -1px 8px;
  line-height: 26px;
  background: #fbfcfc;
  border: 1px solid #c5c9ca;
  border-bottom: 0;
  color: #333;
}
.tabs a.lead { border-left: 1px solid #c5c9ca; }
.tabs a.last { padding: 0 14px 0 13px; border-right-color: #c5c9ca; }
.helpers { display: flex; align-items: center; gap: 8px; height: 34px; padding-right: 3px; color: #777; }
.helpers svg { width: 16px; height: 16px; }
.helpers svg.chev { width: 12px; height: 10px; }
.helpers svg.car { width: 7px; height: 5px; }

/* ribbon */
.ribbon {
  display: grid;
  grid-template-columns: 195px 195px 71px 147px 249px 206px 163px 218px 47px 1fr;
  border: 1px solid #c3c8ca;
  background: #fbfcfc;
}
.group { display: flex; flex-direction: column; border-right: 1px solid #d3d7d8; min-width: 0; }
.group.rest { border: 0; }
.tools { display: flex; height: 78px; padding-top: 2px; }
.group h2 {
  display: flex;
  align-items: center;
  justify-content: center;
  gap: 2px;
  height: 22px;
  border-top: 1px solid #c3c8ca;
  background: #eef0f0;
  font-weight: 400;
  font-size: 12px;
}
.group h2 svg { width: 7px; height: 5px; color: #777; }
.tools button { white-space: nowrap; }
.big { flex-direction: column; justify-content: flex-start; align-self: flex-start; gap: 9px; padding-top: 3px; }
.tools .big { white-space: normal; line-height: 13px; text-align: center; }
.big svg { width: 30px; height: 32px; }
.w48 { width: 48px; }
.w60 { width: 58px; }
.w66 { width: 66px; }
.w72 { width: 71px; }
.big.sep { border-left: 1px solid #dcdfe0; margin-left: 6px; height: 60px; }
.col { display: flex; flex-direction: column; align-items: flex-start; padding-left: 1px; }
.col.wide { width: 100px; }
.col.inset { padding-left: 4px; }
.col.sep { align-self: flex-start; border-left: 1px solid #dcdfe0; }
.col.pad { padding-left: 8px; }
.col button { height: 24px; gap: 4px; }
.col svg { width: 16px; height: 16px; }
.col svg.car { width: 7px; height: 5px; margin-left: 3px; }
.off { color: #8d8f90; }
.off svg { filter: grayscale(1); opacity: .6; }

/* work area */
.work { flex: 1; display: flex; }
.side { width: 318px; flex: none; display: flex; flex-direction: column; padding: 13px 0 11px; }
.sidetabs { display: flex; }
.sidetabs button { width: 30px; height: 30px; border: 1px solid #c3c8ca; border-left: 0; background: #eff1f1; }
.sidetabs button.on { border-left: 1px solid #c3c8ca; border-bottom: 0; background: #fbfcfc; }
.sidetabs svg { width: 20px; height: 20px; }
.panel {
  flex: 1;
  display: flex;
  flex-direction: column;
  border: 1px solid #c3c8ca;
  border-top: 0;
  border-right: 3px solid #c3c8ca;
  margin-right: 1px;
}
.model { height: 469px; border-bottom: 1px solid #c3c8ca; }
.head { display: flex; align-items: center; height: 30px; padding: 0 3px 0 5px; }
.head h3 { flex: 1; display: flex; align-items: center; gap: 6px; font: 700 12px/16px Roboto, sans-serif; }
.head h3 svg { width: 10px; height: 10px; }
.head button svg { width: 20px; height: 20px; }
.head button.end { margin-left: 7px; }
.head button.dd, .find .dd { width: 22px; color: #777; }
.head .dd svg, .find .dd svg { width: 7px; height: 5px; }
.find { display: flex; align-items: center; height: 24px; padding: 0 0 2px 4px; border-bottom: 1px solid #c3c8ca; color: #777; }
.find .box { flex: 1; display: flex; height: 21px; border: 1px solid #b5babc; background: #fff; }
.find input { flex: 1; min-width: 0; border: 0; background: none; outline: 0; padding: 0 4px; }
.find button { width: 25px; }
.find .box button, .find .dd { width: 20px; }
.find svg { width: 16px; height: 16px; }
.find .box svg { width: 8px; height: 8px; }
.find svg.pl { width: 12px; height: 12px; }
.mechs .head { height: 27px; padding-top: 3px; border-bottom: 1px solid #c3c8ca; }

.tree { list-style: none; padding-top: 5px; font-size: 13px; color: #444; }
.tree li { display: flex; align-items: center; height: 20px; }
.tree i { width: 12px; margin-right: 3px; }
.tree i svg { width: 9px; height: 9px; }
.tree li > svg { width: 16px; height: 16px; margin-right: 8px; }
.tree span { display: flex; align-items: center; padding: 0 1px; line-height: 18px; }
.tree .sm { font-size: 12px; }
.l0 { padding-left: 10px; }
.l1 { padding-left: 15px; }
.l2 { padding-left: 35px; }
.tree .sel { background: #b4e2fb; color: #123a55; }
.datum > svg { color: #7a6a45; }
.mark { width: 7px; height: 9px; }
.mark.wide { width: 9px; }

/* graphics area */
.canvas { position: relative; flex: 1; background: linear-gradient(#000, #fff); }
.scene { position: absolute; width: 100%; height: 100%; }
.viewbar {
  position: absolute;
  top: 7px;
  left: 0;
  right: 0;
  width: max-content;
  margin: 0 auto;
  display: flex;
  padding: 0 5px;
  border: 1px solid #bbb;
  background: #f3f4f4;
}
.viewbar button { position: relative; width: 27px; height: 26px; background: #fcfdfd; border-right: 1px solid #cfd3d4; }
.viewbar button:first-child { border-left: 1px solid #cfd3d4; }
.viewbar .more { width: 28px; }
.viewbar svg { width: 17px; height: 17px; }
.viewbar .on { border: 1px solid #a5aaac; border-top-width: 2px; background: #e2e5e7; }
.viewbar .more::after { content: ""; position: absolute; right: 1px; bottom: 3px; border: 2px solid #555; border-top-color: transparent; border-left-color: transparent; }
.tol { position: absolute; right: 66px; bottom: 6px; font: 14px/16px "Liberation Sans", sans-serif; color: #a6a6a6; text-align: center; }
.tol .ang { padding-right: 14px; }

/* dialog */
.dialog {
  position: absolute;
  top: 186px;
  right: -4px;
  width: 339px;
  border: 4px solid #bfc4c5;
  background: #eef0f0;
  box-shadow: inset 0 0 0 1px #f8fafa;
}
.dtitle { display: flex; align-items: center; height: 19px; border-bottom: 1px solid #cbcfd0; background: linear-gradient(#f8f9f9, #e4e7e7); }
.dtitle h2 { flex: 1; text-align: center; font: 700 12px/18px Roboto, sans-serif; color: #5c5f60; padding-left: 20px; }
.dtitle button { width: 22px; }
.dtitle svg { width: 10px; height: 10px; }
.dbody { padding: 17px 10px 32px; }
.dbody fieldset { border: 1px solid #c9cccd; min-width: 0; }
.dbody legend { margin-left: 5px; padding: 0 6px; font: 700 12px/12px Roboto, sans-serif; }
.dbody .f-name { padding: 2px 7px 7px; }
.dbody .f-type { padding: 3px 7px 8px; }
.dbody .f-conn { padding: 2px 7px 10px; }
.dbody .f-comp { padding: 2px 7px 8px; }
.dbody .f-tall { padding: 6px 7px 12px; }
.dbody .f-eval { padding: 6px 7px 7px; }
.dbody input[type=text] { display: block; flex: 1; width: 100%; min-width: 0; height: 21px; border: 1px solid #aaafb0; background: #fff; padding: 0 3px; }
.dbody input[readonly] { background: #eff1f1; }
.line { display: flex; align-items: center; gap: 3px; }
.line .pick { width: 169px; }
.pick { position: relative; display: block; }
.pick select {
  appearance: none;
  display: block;
  width: 100%;
  height: 20px;
  padding: 0 15px 0 7px;
  border: 1px solid #b5babb;
  border-radius: 0;
  background: linear-gradient(#fdfdfd, #f0f2f2);
}
.pick::before { content: ""; position: absolute; top: 1px; bottom: 1px; right: 14px; border-left: 1px solid #c0c4c5; }
.pick::after { content: ""; position: absolute; top: 8px; right: 4px; border: 4px solid transparent; border-top-color: #777; border-bottom: 0; }
.pick.dis select { color: #a3a6a7; opacity: 1; border-color: #cfd2d3; }
.pick.dis::after { border-top-color: #aaa; }
.arrow { width: 40px; height: 28px; border: 1px solid #bfc4c5; border-radius: 2px; background: linear-gradient(#fafbfb, #eceeee); }
.arrow svg { width: 14px; height: 20px; }
.tick { display: flex; align-items: center; gap: 7px; height: 13px; margin: 3px 0 0 3px; }
.tick input { appearance: none; width: 13px; height: 13px; border: 1px solid #999ea0; background: #fff; }
.pair { display: grid; grid-template-columns: 172px 1fr; }
.dfoot { display: flex; justify-content: flex-end; align-items: center; gap: 8px; height: 43px; padding-right: 10px; border-top: 1px solid #c6cacb; box-shadow: inset 0 1px 0 #f8fafa; }
.dfoot button { width: 63px; height: 21px; border: 1px solid #b9bebf; border-radius: 2px; background: linear-gradient(#fefefe, #eceeee); font: 700 12px/16px Roboto, sans-serif; }
.dfoot .ok { border-color: #9ccbe8; background: linear-gradient(#c2e6fb, #86cdf8); }
.dfoot .bar { height: 20px; border-left: 1px solid #cbd0d1; }
```
